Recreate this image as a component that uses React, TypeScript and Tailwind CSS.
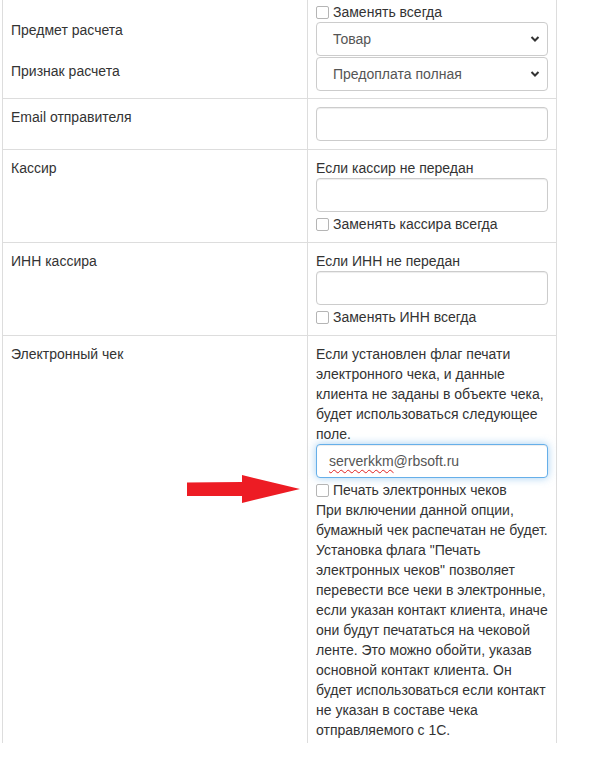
import React from 'react';

const Checkbox: React.FC<{ label: string; className?: string }> = ({ label, className = '' }) => (
  <label className={`flex items-center h-[20px] ${className}`}>
    <span className="w-[13px] h-[13px] border border-[#b5b5b5] rounded-[2px] bg-white mr-[4px] shrink-0" />
    <span>{label}</span>
  </label>
);

const Chevron = () => (
  <svg width="10" height="7" viewBox="0 0 10 7" className="absolute right-[7px] top-1/2 -translate-y-1/2">
    <polyline points="1.5,1.5 5,5 8.5,1.5" fill="none" stroke="#333" strokeWidth="2" />
  </svg>
);

const Select: React.FC<{ value: string }> = ({ value }) => (
  <div className="relative h-[34px] border border-[#ccc] rounded-[4px] bg-white flex items-center pl-[16px] text-[#555]">
    {value}
    <Chevron />
  </div>
);

const TextInput: React.FC = () => (
  <div className="h-[34px] border border-[#ccc] rounded-[4px] bg-white shadow-[inset_0_1px_1px_rgba(0,0,0,0.075)]" />
);

const Row: React.FC<{ left: React.ReactNode; right: React.ReactNode; first?: boolean; rightPad?: string; leftPad?: string }> = ({
  left,
  right,
  first,
  rightPad = 'pt-[8px] pb-[8px]',
  leftPad = 'pt-[8px] pb-[8px]',
}) => (
  <div className={`flex ${first ? '' : 'border-t border-[#ddd]'}`}>
    <div className={`w-[305px] shrink-0 border-r border-[#ddd] px-[8px] ${leftPad}`}>{left}</div>
    <div className={`w-[249px] shrink-0 border-r border-[#ddd] px-[8px] ${rightPad}`}>{right}</div>
  </div>
);

export default function App() {
  return (
    <div className="relative w-[598px] h-[777px] bg-white overflow-hidden font-['Liberation_Sans',Arial,sans-serif] text-[14px] leading-[20px] text-[#333]">
      <div className="ml-[2px] w-[555px] border-l border-[#ddd]">
        <Row
          first
          leftPad="pt-[20px] pb-[7px]"
          rightPad="pt-[2px] pb-[7px]"
          left={
            <div>
              <div>Предмет расчета</div>
              <div className="mt-[21px]">Признак расчета</div>
            </div>
          }
          right={
            <div>
              <Checkbox label="Заменять всегда" />
              <Select value="Товар" />
              <div className="mt-[1px]">
                <Select value="Предоплата полная" />
              </div>
            </div>
          }
        />
        <Row left={<div>Email отправителя</div>} right={<TextInput />} />
        <Row
          rightPad="pt-[8px] pb-[8px]"
          left={<div>Кассир</div>}
          right={
            <div>
              <div>Если кассир не передан</div>
              <TextInput />
              <Checkbox className="mt-[2px]" label="Заменять кассира всегда" />
            </div>
          }
        />
        <Row
          rightPad="pt-[8px] pb-[8px]"
          left={<div>ИНН кассира</div>}
          right={
            <div>
              <div>Если ИНН не передан</div>
              <TextInput />
              <Checkbox className="mt-[2px]" label="Заменять ИНН всегда" />
            </div>
          }
        />
        <Row
          rightPad="pt-[8px] pb-[3px]"
          left={<div>Электронный чек</div>}
          right={
            <div>
              <p>
                Если установлен флаг печати электронного чека, и данные клиента не заданы в объекте чека, будет
                использоваться следующее поле.
              </p>
              <div className="h-[34px] border border-[#66afe9] rounded-[4px] bg-white flex items-center pl-[12px] text-[#555] shadow-[inset_0_1px_1px_rgba(0,0,0,0.075),0_0_8px_rgba(102,175,233,0.6)]">
                <span>
                  <span className="underline decoration-wavy decoration-[#e02020] decoration-1 underline-offset-[3px]">serverkkm</span>
                  @rbsoft.ru
                </span>
              </div>
              <Checkbox className="mt-[2px]" label="Печать электронных чеков" />
              <p>
                При включении данной опции, бумажный чек распечатан не будет. Установка флага "Печать электронных
                чеков" позволяет перевести все чеки в электронные, если указан контакт клиента, иначе они будут
                печататься на чековой ленте. Это можно обойти, указав основной контакт клиента. Он будет
                использоваться если контакт не указан в составе чека отправляемого с 1С.
              </p>
            </div>
          }
        />
      </div>
      <svg className="absolute left-[187px] top-[475px]" width="114" height="29" viewBox="0 0 114 29">
        <polygon points="0,7.5 55,7 55,0 113,14 55,28 55,21 0,21" fill="#ed1c24" />
      </svg>
    </div>
  );
}
